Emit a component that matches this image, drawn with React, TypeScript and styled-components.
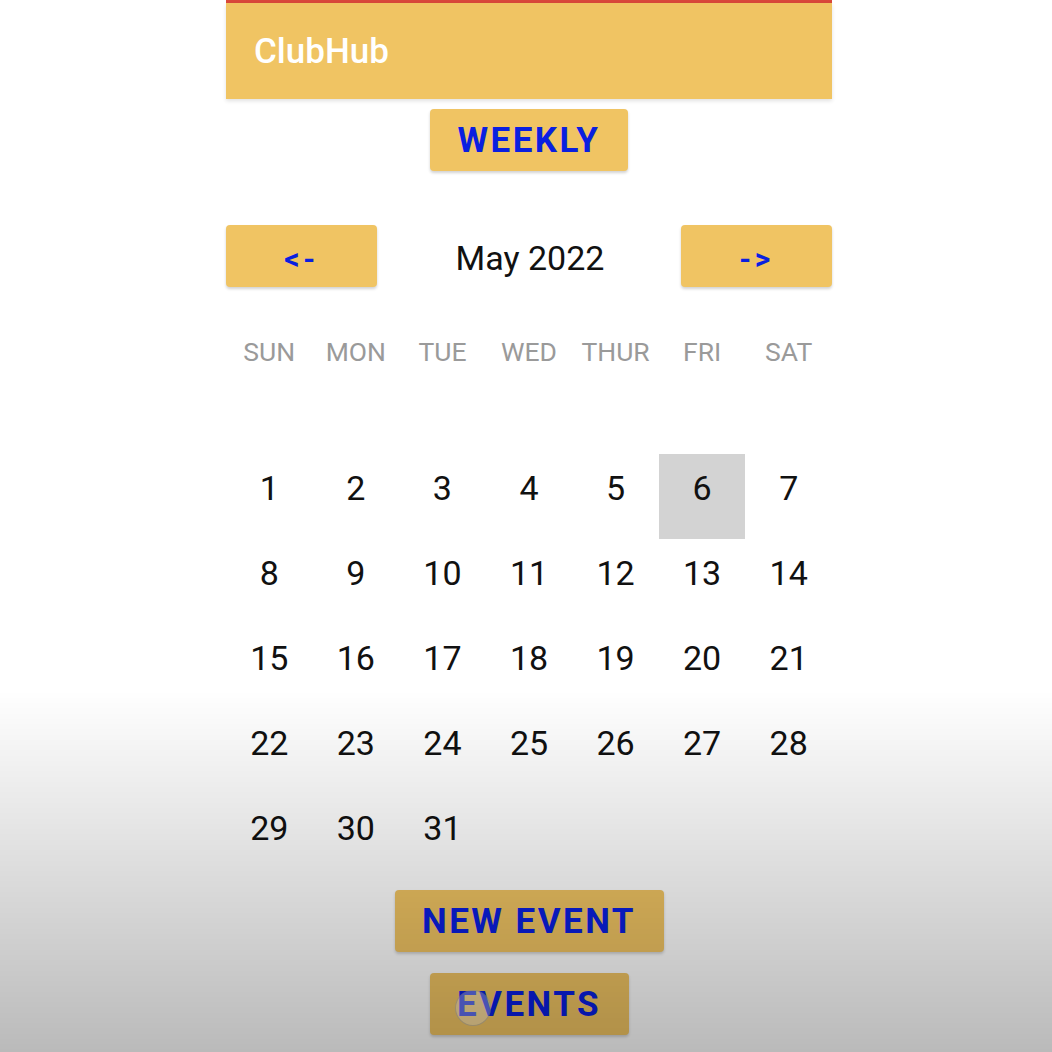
import React from "react";
import styled, { createGlobalStyle } from "styled-components";

const Global = createGlobalStyle`
  html, body {
    margin: 0;
    padding: 0;
    background: #ffffff;
    font-family: Roboto, "Liberation Sans", Arial, sans-serif;
  }
  * { box-sizing: border-box; }
`;

const Page = styled.div`
  width: 1052px;
  min-height: 1052px;
  padding-left: 226px;
  background: #ffffff;
`;

const Phone = styled.div`
  width: 606px;
  display: flex;
  flex-direction: column;
  align-items: center;
`;

const StatusLine = styled.div`
  width: 100%;
  height: 3px;
  background: #d9473a;
`;

const AppBar = styled.header`
  width: 100%;
  height: 96px;
  background: #f0c463;
  display: flex;
  align-items: center;
  padding-left: 28px;
  box-shadow: 0 2px 4px rgba(0, 0, 0, 0.12);
  color: #ffffff;
  font-size: 35px;
  font-weight: 500;
`;

const Button = styled.button<{ $w: number; $top: number; $size?: number }>`
  width: ${(p) => p.$w}px;
  height: 62px;
  margin-top: ${(p) => p.$top}px;
  border: none;
  border-radius: 4px;
  background: #f0c463;
  box-shadow: 0 2px 3px rgba(0, 0, 0, 0.18);
  color: #0a1fe0;
  font-family: Roboto, "Liberation Sans", Arial, sans-serif;
  font-weight: 700;
  font-size: ${(p) => p.$size ?? 35}px;
  letter-spacing: 0.07em;
  display: flex;
  align-items: center;
  justify-content: center;
  padding: 0;
  position: relative;
`;

const ArrowText = styled.span`
  padding-top: 4px;
  letter-spacing: 0.12em;
`;

const NavRow = styled.div`
  width: 100%;
  margin-top: 54px;
  display: flex;
  align-items: center;
  justify-content: space-between;
`;

const MonthLabel = styled.div`
  font-size: 34px;
  color: #111111;
  padding-left: 2px;
  padding-top: 4px;
`;

const Grid = styled.div<{ $top: number }>`
  width: 100%;
  margin-top: ${(p) => p.$top}px;
  display: grid;
  grid-template-columns: repeat(7, 1fr);
`;

const DayName = styled.div`
  height: 40px;
  line-height: 42px;
  text-align: center;
  font-size: 26.5px;
  color: #9a9a9a;
`;

const DateCell = styled.div<{ $active?: boolean }>`
  height: 85px;
  padding-top: 14px;
  line-height: 40px;
  text-align: center;
  font-size: 34px;
  color: #111111;
  background: ${(p) => (p.$active ? "#d3d3d3" : "transparent")};
`;

const Touch = styled.span`
  position: absolute;
  left: 25px;
  top: 17px;
  width: 36px;
  height: 36px;
  border-radius: 50%;
  background: rgba(255, 255, 255, 0.35);
  border: 1.5px solid rgba(120, 120, 120, 0.35);
`;

const Shade = styled.div`
  position: fixed;
  left: 0;
  top: 690px;
  width: 1052px;
  height: 362px;
  pointer-events: none;
  background: linear-gradient(rgba(0, 0, 0, 0), rgba(0, 0, 0, 0.27));
`;

const days = ["SUN", "MON", "TUE", "WED", "THUR", "FRI", "SAT"];
const dates: (number | null)[] = [
  ...Array.from({ length: 31 }, (_, i) => i + 1),
  null,
  null,
  null,
  null,
];

export default function App() {
  return (
    <>
      <Global />
      <Page>
        <Phone>
          <StatusLine />
          <AppBar>ClubHub</AppBar>
          <Button $w={198} $top={10}>WEEKLY</Button>
          <NavRow>
            <Button $w={151} $top={0} $size={30}>
              <ArrowText>&lt;-</ArrowText>
            </Button>
            <MonthLabel>May 2022</MonthLabel>
            <Button $w={151} $top={0} $size={30}>
              <ArrowText>-&gt;</ArrowText>
            </Button>
          </NavRow>
          <Grid $top={44}>
            {days.map((d) => (
              <DayName key={d}>{d}</DayName>
            ))}
          </Grid>
          <Grid $top={83}>
            {dates.map((d, i) => (
              <DateCell key={i} $active={d === 6}>
                {d ?? ""}
              </DateCell>
            ))}
          </Grid>
          <Button $w={269} $top={11}>NEW EVENT</Button>
          <Button $w={199} $top={21}>
            EVENTS
            <Touch />
          </Button>
        </Phone>
      </Page>
      <Shade />
    </>
  );
}
